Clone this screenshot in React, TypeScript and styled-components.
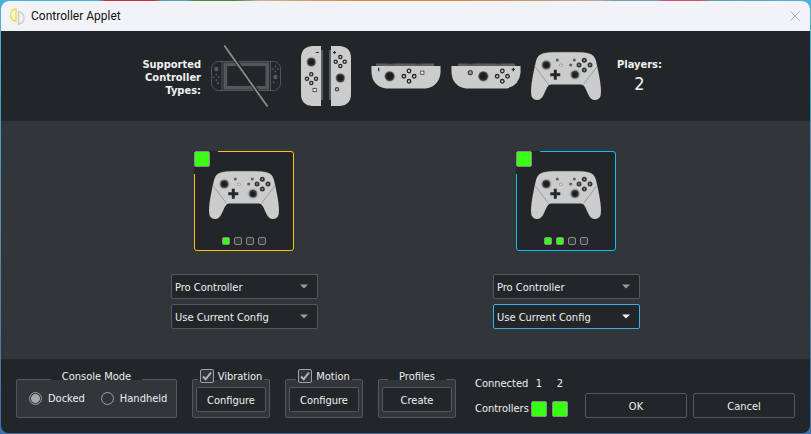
import React from "react";
import styled, { createGlobalStyle } from "styled-components";

const dark = "#232629";
const panel = "#31363b";
const line = "#54575b";
const text = "#eff0f1";
const green = "#39ff14";
const plastic = "#cccccc";

const GlobalStyle = createGlobalStyle`
  * { box-sizing: border-box; }
  body {
    margin: 0;
    color: ${text};
    font: 11px/14px "DejaVu Sans Condensed", "Noto Sans", sans-serif;
    background:
      linear-gradient(90deg, #45b4dc 12%, #c8323c 13% 19%, #58a0b8 20% 23%, #4c8a3c 24% 29%, #c9b48a 32%, #d98a3a 44% 56%, #b9a59a 74%, #6f9fb4 76% 81%, #cf5060 82% 86%, #5f9fb8 88%, #45b4dc) top / 100% 4px no-repeat,
      linear-gradient(#4fb0d8 0, #4f9dbd 25%, #5b8aa0 60%, #3f6fa8 100%);
  }
  button, select, input { font: inherit; color: inherit; margin: 0; }
`;

const Desktop = styled.div`
  display: flex;
  min-height: 100vh;
  padding: 1px;
`;

const Window = styled.main`
  flex: 1;
  display: flex;
  flex-direction: column;
  overflow: hidden;
  border-radius: 8px;
  background: ${panel};
`;

const TitleBar = styled.header`
  display: flex;
  align-items: center;
  height: 30px;
  padding: 0 10px 0 8px;
  background: #f1f3f9;
  color: #111;
`;

const Title = styled.h1`
  flex: 1;
  margin: 0 0 0 6px;
  font: 12px/16px Roboto, sans-serif;
`;

const CloseButton = styled.button`
  display: flex;
  padding: 0;
  border: 0;
  background: none;
`;

const Supported = styled.section`
  display: flex;
  justify-content: center;
  align-items: center;
  height: 90px;
  background: ${dark};
`;

const SupportedLabel = styled.div`
  display: flex;
  flex-direction: column;
  align-items: flex-end;
  width: 60px;
  margin-right: 10px;
  padding-top: 2px;
  font-weight: 700;
  line-height: 13px;
`;

const Kinds = styled.div`
  display: flex;
  align-items: center;
  gap: 10px;
`;

const PlayerCount = styled.div`
  width: 61px;
  margin-left: 8px;
  padding-top: 2px;
  text-align: center;
`;

const CountLabel = styled.div`
  font-weight: 700;
`;

const CountValue = styled.div`
  font-size: 18px;
  line-height: 24px;
`;

const Players = styled.section`
  flex: 1;
  display: flex;
  justify-content: center;
  gap: 175px;
  padding: 30px 0;
`;

const Player = styled.div`
  display: flex;
  flex-direction: column;
  width: 147px;
  gap: 23px;
`;

const Card = styled.div<{ $color: string }>`
  position: relative;
  display: flex;
  flex-direction: column;
  align-items: center;
  gap: 17px;
  width: 100px;
  height: 100px;
  margin-left: 23px;
  padding-top: 18px;
  border: 1px solid ${(p) => p.$color};
  border-radius: 3px;
  background: ${dark};
`;

const CardCorner = styled.div`
  position: absolute;
  top: -1px;
  left: -1px;
  width: 24px;
  height: 23px;
  background: ${dark};
`;

const GreenCheck = styled.input`
  display: block;
  appearance: none;
  width: 16px;
  height: 16px;
  border: 1px solid #8b8b8b;
  border-radius: 2px;
  &:checked { background: ${green}; }
`;

const Leds = styled.div`
  display: flex;
  gap: 4px;
`;

const Led = styled.span<{ $on: boolean }>`
  width: 8px;
  height: 8px;
  border: 1px solid #8b8b8b;
  border-radius: 2px;
  background: ${(p) => (p.$on ? green : panel)};
`;

const Selects = styled.div`
  display: flex;
  flex-direction: column;
  gap: 5px;
  width: 100%;
`;

const SelectBox = styled.div`
  display: grid;
  align-items: center;
  > * { grid-area: 1 / 1; }
  > svg { justify-self: end; margin-right: 10px; pointer-events: none; }
`;

const Select = styled.select<{ $focus?: boolean }>`
  appearance: none;
  width: 100%;
  height: 25px;
  padding: 2px 22px 0 3px;
  border: 1px solid ${(p) => (p.$focus ? "#3daee9" : line)};
  border-radius: 2px;
  background: ${dark};
  outline: 0;
`;

const Footer = styled.footer`
  display: flex;
  align-items: flex-end;
  gap: 15px;
  height: 74px;
  padding: 0 15px 15px;
  background: ${dark};
`;

const GroupRoot = styled.div`
  display: flex;
  flex-direction: column;
`;

const GroupTitle = styled.div<{ $pad: number }>`
  z-index: 1;
  display: flex;
  align-items: center;
  align-self: center;
  gap: 4px;
  height: 14px;
  margin-bottom: -3px;
  padding: 0 ${(p) => p.$pad}px;
  background: linear-gradient(${dark} 11px, transparent 11px);
  white-space: nowrap;
`;

const TitleCheck = styled.label`
  display: flex;
  align-items: center;
  gap: 4px;
`;

const TitleText = styled.span`
  padding-top: 2px;
`;

const CheckBox = styled.span`
  display: grid;
  > * { grid-area: 1 / 1; }
  > svg { pointer-events: none; }
`;

const CheckInput = styled.input`
  appearance: none;
  width: 14px;
  height: 14px;
  border: 1px solid #a0a1a2;
  border-radius: 2px;
  background: ${panel};
`;

const GroupBody = styled.div<{ $wide?: boolean }>`
  display: flex;
  align-items: center;
  gap: 16px;
  min-width: ${(p) => (p.$wide ? 161 : 78)}px;
  height: 39px;
  margin-top: -1px;
  padding: ${(p) => (p.$wide ? "0 0 0 12px" : "7px 3px 5px")};
  border: 1px solid ${line};
  border-radius: 2px;
  background: ${panel};
`;

const RadioLabel = styled.label`
  display: flex;
  align-items: center;
  gap: 6px;
`;

const Radio = styled.input`
  appearance: none;
  width: 13px;
  height: 13px;
  border: 1px solid #a0a1a2;
  border-radius: 50%;
  &:checked { background: radial-gradient(#a6a7a8 4px, transparent 5px); }
`;

const Button = styled.button<{ $width: number }>`
  width: ${(p) => p.$width}px;
  height: 25px;
  padding: 2px 0 0;
  border: 1px solid ${line};
  border-radius: 2px;
  background: ${dark};
`;

const Connected = styled.div`
  display: grid;
  grid-template-columns: 51px 16px 16px;
  grid-template-rows: 16px 16px;
  gap: 9px 5px;
  align-items: center;
  margin: 0 0 1px 4px;
  white-space: nowrap;
`;

const Digit = styled.span`
  text-align: center;
`;

const Actions = styled.div`
  display: flex;
  gap: 6px;
  margin-left: auto;
`;

const Ring = ({ x, y, r = 1.6 }: { x: number; y: number; r?: number }) => (
  <circle cx={x} cy={y} r={r} fill={plastic} stroke={dark} strokeWidth="1.3" />
);

const Stick = ({ x, y, r = 4 }: { x: number; y: number; r?: number }) => (
  <g>
    <circle cx={x} cy={y} r={r + 0.8} fill="#85888a" />
    <circle cx={x} cy={y} r={r} fill="#33373a" />
    <circle cx={x} cy={y} r={r - 1.3} fill="#1b1e21" />
  </g>
);

const Capture = ({ x, y }: { x: number; y: number }) => (
  <rect x={x - 1.6} y={y - 1.6} width="3.2" height="3.2" fill="#fff" stroke="#44474a" strokeWidth="0.9" />
);

const ProController = () => (
  <svg width="70" height="50" viewBox="0 0 70 50">
    <path d="M9 3.2Q14 .8 22 .6H48Q56 .8 61 3.2L58 3.5H12Z" fill="#3b3f42" />
    <path
      d="M12 2.6Q17 1.2 23 1.2H47Q53 1.2 58 2.6Q63.500 4 65 10L67 19Q70 33 70 41Q70 49 64 49Q59.500 49 57 43L54 36.500Q52.500 33.500 50 33.500H20Q17.500 33.500 16 36.500L13 43Q10.500 49 6 49Q0 49 0 41Q0 33 3 19L5 10Q6.500 4 12 2.600Z"
      fill={plastic}
    />
    <path d="M4 15.500L17.500 33.500M66 15.500L52.500 33.500" stroke="#85888a" strokeWidth=".7" fill="none" />
    <circle cx="15.300" cy="14" r="5.600" fill="#bcbcbc" />
    <circle cx="44" cy="23.700" r="5.600" fill="#bcbcbc" />
    <Stick x={15.3} y={14} r={3.8} />
    <Stick x={44} y={23.7} r={3.6} />
    <path d="M22.800 18.700h3v3.500h3.500v3h-3.500v3.500h-3v-3.500h-3.500v-3h3.500z" fill="#24282b" />
    <circle cx="26.300" cy="9" r="1.500" fill="#5e6164" />
    <circle cx="43.300" cy="9" r="1.500" fill="#5e6164" />
    <circle cx="39.700" cy="14" r="1.600" fill="#5e6164" />
    <rect x="28.500" y="13.200" width="3" height="2" rx=".6" fill="#eee" stroke="#77797b" strokeWidth=".6" />
    {[[53.3, 9.3], [48, 14], [59, 14], [53.3, 19]].map(([x, y]) => (
      <g key={`${x}-${y}`}>
        <circle cx={x} cy={y} r="2.500" fill="#33373a" />
        <circle cx={x} cy={y} r=".8" fill="#b5b5b5" />
      </g>
    ))}
  </svg>
);

const Handheld = () => (
  <svg width="70" height="62" viewBox="0 0 70 62" fill="none">
    <rect x=".5" y="16.500" width="69" height="29" rx="7" stroke="#54575a" />
    <path d="M11 16.500V45.500M59.500 16.500V45.500" stroke="#54575a" />
    <rect x="14.300" y="19.300" width="42" height="23.500" stroke="#54575a" strokeWidth="3.600" />
    <g fill="#54575a">
      <circle cx="5.300" cy="24" r="2.200" />
      <circle cx="64.300" cy="32" r="2.200" />
      {[[5.3, 32.3], [64.3, 24]].map(([x, y]) => (
        <g key={x}>
          <circle cx={x} cy={y - 2.6} r="1" />
          <circle cx={x} cy={y + 2.6} r="1" />
          <circle cx={x - 2.6} cy={y} r="1" />
          <circle cx={x + 2.6} cy={y} r="1" />
        </g>
      ))}
      <rect x="6" y="37" width="2" height="2" />
      <circle cx="62.700" cy="37.500" r="1" />
    </g>
    <path d="M13.500 0L56.500 61.500" stroke={dark} strokeWidth="4" />
    <path d="M13.300 .5L56.500 61.500" stroke="#8b8b8b" strokeWidth="1.800" />
  </svg>
);

const DualJoycons = () => (
  <svg width="70" height="60" viewBox="0 0 70 60">
    <path d="M29 4h3v50h-3zM38 4h3v50h-3z" fill="#5b5e61" />
    <path d="M30 0V60H21Q10 59 10 48V12Q10 1 21 0ZM40 0V60H49Q60 59 60 48V12Q60 1 49 0Z" fill={plastic} />
    <path d="M24.800 6.500h3M42 6.500h3M43.500 5v3" stroke={dark} strokeWidth="1.100" />
    <Stick x={20.3} y={16} />
    <Ring x={20.3} y={28.3} />
    <Ring x={16} y={32.7} />
    <Ring x={25} y={32.7} />
    <Ring x={20.3} y={37} />
    <Capture x={23.7} y={44} />
    <Ring x={49.3} y={11} />
    <Ring x={44.7} y={15.7} />
    <Ring x={53.7} y={15.7} />
    <Ring x={49.3} y={20} />
    <Stick x={49.3} y={32} />
    <circle cx="46" cy="43.300" r="1.700" fill="#b0b0b0" stroke="#44474a" strokeWidth="1.100" />
  </svg>
);

const SingleJoycon = ({ right = false }: { right?: boolean }) => {
  const bx = right ? 51.3 : 38;
  return (
    <svg width="70" height="26" viewBox="0 0 70 26">
      <path d={right ? "M7 .4H63L65 3.200H7Z" : "M5 .4H63V3.200H5Z"} fill="#5b5e61" />
      <path d="M16 .3h7v1h-7zM44 .3h7v1h-7z" fill="#303437" />
      <path d="M.5 3H69.500V10Q68 23 55 25.600H15Q1.500 23 .5 10Z" fill={plastic} />
      <Stick x={right ? 32.3 : 18.7} y={13.3} r={4.5} />
      <Ring x={bx} y={8} r={1.8} />
      <Ring x={bx - 5.1} y={13.3} r={1.8} />
      <Ring x={bx + 5.2} y={13.3} r={1.8} />
      <Ring x={bx} y={18.3} r={1.8} />
      {right ? (
        <g>
          <circle cx="19.300" cy="9.700" r="2" fill="#a5a5a5" stroke="#44474a" strokeWidth="1.300" />
          <path d="M60.600 6.500h3.400M62.300 4.800v3.400" stroke={dark} strokeWidth="1.200" />
        </g>
      ) : (
        <g>
          <Capture x={51.3} y={9.7} />
          <path d="M7.700 4.800v3.400" stroke={dark} strokeWidth="1.200" />
        </g>
      )}
    </svg>
  );
};

const Logo = () => (
  <svg width="16" height="18" viewBox="0 0 16 18" fill="none" strokeWidth="1.300">
    <path d="M7 1.700V14.300Q1.600 13 1.600 8T7 1.700Z" stroke="#f5dc28" />
    <path d="M9.600 4.700V17.300Q15 16 15 11T9.600 4.700Z" stroke="#c9cacd" />
  </svg>
);

const Arrow = ({ color = "#9a9b9c" }: { color?: string }) => (
  <svg width="8" height="5" viewBox="0 0 8 5">
    <path d="M0 .5H8L4 4.500Z" fill={color} />
  </svg>
);

type GroupProps = { title: string; check?: boolean; wide?: boolean; children: React.ReactNode };

const Group = ({ title, check, wide, children }: GroupProps) => (
  <GroupRoot role="group" aria-label={title}>
    <GroupTitle $pad={check ? 2 : 11}>
      {check ? (
        <TitleCheck>
          <CheckBox>
            <CheckInput type="checkbox" defaultChecked />
            <svg width="14" height="14" viewBox="0 0 14 14" fill="none">
              <path d="M3 7.500L5.700 10.200L11 3.500" stroke="#b4b5b6" strokeWidth="2" />
            </svg>
          </CheckBox>
          <TitleText>{title}</TitleText>
        </TitleCheck>
      ) : (
        <TitleText>{title}</TitleText>
      )}
    </GroupTitle>
    <GroupBody $wide={wide}>{children}</GroupBody>
  </GroupRoot>
);

const players = [
  { id: 1, color: "#ffc20e", focus: false },
  { id: 2, color: "#10bdf2", focus: true },
];

export default function App() {
  return (
    <>
      <GlobalStyle />
      <Desktop>
        <Window>
          <TitleBar>
            <Logo />
            <Title>Controller Applet</Title>
            <CloseButton aria-label="Close">
              <svg width="10" height="10" viewBox="0 0 10 10">
                <path d="M.3 .3L9.700 9.700M9.700 .3L.3 9.700" stroke="#adafb6" />
              </svg>
            </CloseButton>
          </TitleBar>

          <Supported>
            <SupportedLabel>
              <span>Supported</span>
              <span>Controller</span>
              <span>Types:</span>
            </SupportedLabel>
            <Kinds>
              <Handheld />
              <DualJoycons />
              <SingleJoycon />
              <SingleJoycon right />
              <ProController />
            </Kinds>
            <PlayerCount>
              <CountLabel>Players:</CountLabel>
              <CountValue>2</CountValue>
            </PlayerCount>
          </Supported>

          <Players>
            {players.map((p) => (
              <Player key={p.id}>
                <Card $color={p.color}>
                  <CardCorner>
                    <GreenCheck type="checkbox" defaultChecked aria-label={`Player ${p.id}`} />
                  </CardCorner>
                  <ProController />
                  <Leds>
                    {[1, 2, 3, 4].map((n) => (
                      <Led key={n} $on={n <= p.id} />
                    ))}
                  </Leds>
                </Card>
                <Selects>
                  <SelectBox>
                    <Select aria-label={`Player ${p.id} controller type`}>
                      <option>Pro Controller</option>
                    </Select>
                    <Arrow />
                  </SelectBox>
                  <SelectBox>
                    <Select $focus={p.focus} aria-label={`Player ${p.id} profile`}>
                      <option>Use Current Config</option>
                    </Select>
                    <Arrow color={p.focus ? text : undefined} />
                  </SelectBox>
                </Selects>
              </Player>
            ))}
          </Players>

          <Footer>
            <Group title="Console Mode" wide>
              <RadioLabel>
                <Radio type="radio" name="mode" defaultChecked />
                Docked
              </RadioLabel>
              <RadioLabel>
                <Radio type="radio" name="mode" />
                Handheld
              </RadioLabel>
            </Group>
            <Group title="Vibration" check>
              <Button $width={70}>Configure</Button>
            </Group>
            <Group title="Motion" check>
              <Button $width={70}>Configure</Button>
            </Group>
            <Group title="Profiles">
              <Button $width={70}>Create</Button>
            </Group>
            <Connected>
              <span>Connected</span>
              <Digit>1</Digit>
              <Digit>2</Digit>
              <span>Controllers</span>
              <GreenCheck type="checkbox" defaultChecked aria-label="Controller 1 connected" />
              <GreenCheck type="checkbox" defaultChecked aria-label="Controller 2 connected" />
            </Connected>
            <Actions>
              <Button $width={102}>OK</Button>
              <Button $width={102}>Cancel</Button>
            </Actions>
          </Footer>
        </Window>
      </Desktop>
    </>
  );
}
